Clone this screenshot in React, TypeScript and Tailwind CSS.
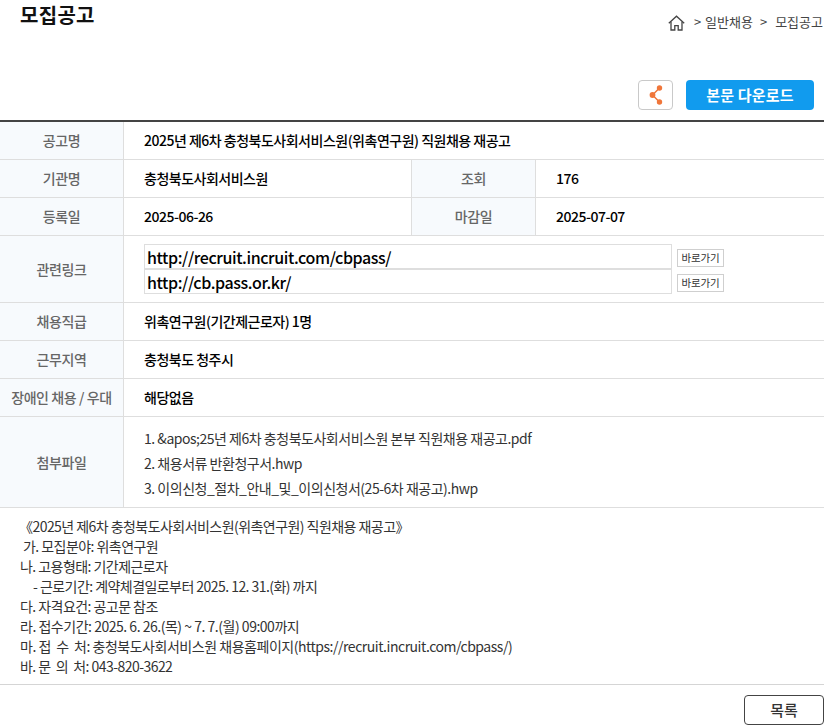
import type { ReactNode } from 'react';

const FONT = "font-['Noto_Sans_CJK_KR','Noto_Sans',sans-serif]";

const bodyLines = [
  { text: '《2025년 제6차 충청북도사회서비스원(위촉연구원) 직원채용 재공고》', className: 'pl-[19px]' },
  { text: '가. 모집분야: 위촉연구원', className: 'pl-[23px]' },
  { text: '나. 고용형태: 기간제근로자', className: 'pl-[20px]' },
  { text: '- 근로기간: 계약체결일로부터 2025. 12. 31.(화) 까지', className: 'pl-[33px]' },
  { text: '다. 자격요건: 공고문 참조', className: 'pl-[20px]' },
  { text: '라. 접수기간: 2025. 6. 26.(목) ~ 7. 7.(월) 09:00까지', className: 'pl-[20px] tracking-[-0.48px]' },
  { text: '마. 접\u00a0\u00a0수\u00a0\u00a0처: 충청북도사회서비스원 채용홈페이지(https://recruit.incruit.com/cbpass/)', className: 'pl-[20px] tracking-[-0.47px]' },
  { text: '바. 문\u00a0\u00a0의\u00a0\u00a0처: 043-820-3622', className: 'pl-[20px]' },
];

const files = [
  "1. &apos;25년 제6차 충청북도사회서비스원 본부 직원채용 재공고.pdf",
  '2. 채용서류 반환청구서.hwp',
  '3. 이의신청_절차_안내_및_이의신청서(25-6차 재공고).hwp',
];

const links = ['http://recruit.incruit.com/cbpass/', 'http://cb.pass.or.kr/'];

function Label({ children, className = 'w-[124px]' }: { children: ReactNode; className?: string }) {
  return (
    <div className={`${className} flex shrink-0 items-center justify-center border-r border-[#dedede] bg-[#f7fafd] text-[14px] font-medium tracking-[-0.4px] text-[#666]`}>
      {children}
    </div>
  );
}

function Value({ children, className = 'flex-1' }: { children: ReactNode; className?: string }) {
  return (
    <div className={`${className} flex items-center pb-[1px] pl-[20px] text-[14px] font-medium tracking-[-0.5px] text-black`}>
      {children}
    </div>
  );
}

function Row({ children, height = 'h-[38px]' }: { children: ReactNode; height?: string }) {
  return <div className={`flex ${height} border-b border-[#dedede]`}>{children}</div>;
}

function ShareIcon() {
  return (
    <svg width="16" height="20" viewBox="0 0 16 20" fill="none">
      <path d="M11.5 3 4.5 10l7 7" stroke="#f0763a" strokeWidth="1.5" />
      <circle cx="11.5" cy="3" r="2.7" fill="#f0763a" />
      <circle cx="4.5" cy="10" r="2.9" fill="#f0763a" />
      <circle cx="11.5" cy="17" r="2.7" fill="#f0763a" />
    </svg>
  );
}

function HomeIcon() {
  return (
    <svg width="17" height="16" viewBox="0 0 17 16" fill="none" stroke="#444" strokeWidth="1.3">
      <path d="M0.8 8.2 8.5 1.2l7.7 7" />
      <path d="M3 6.8V15h3.8v-4.4h3.4V15H14V6.8" />
    </svg>
  );
}

export default function App() {
  return (
    <div className={`${FONT} h-[726px] w-[824px] overflow-hidden bg-white`}>
      <div className="flex h-[80px] items-start pl-[20px]">
        <h1 className="text-[20px] leading-[30px] font-bold tracking-[0.3px] text-[#111]">모집공고</h1>
        <div className="ml-auto mr-[1px] mt-[12px] flex shrink-0 items-center text-[13px] leading-[18px] text-[#444]">
          <span className="mt-[3px] mr-[9px]"><HomeIcon /></span>
          <span>&gt;</span>
          <span className="ml-[4px]">일반채용</span>
          <span className="ml-[7px]">&gt;</span>
          <span className="ml-[8px]">모집공고</span>
        </div>
      </div>

      <div className="flex h-[40px] items-start justify-end gap-[13px] pr-[10px]">
        <button className="flex h-[30px] w-[35px] items-center justify-center rounded-[4px] border border-[#c9c9c9] bg-white">
          <ShareIcon />
        </button>
        <button className="h-[30px] w-[128px] rounded-[4px] bg-[#119bee] text-[15px] font-bold tracking-[0.2px] text-white">
          본문 다운로드
        </button>
      </div>

      <div className="border-t-2 border-[#444]">
        <Row>
          <Label>공고명</Label>
          <Value>2025년 제6차 충청북도사회서비스원(위촉연구원) 직원채용 재공고</Value>
        </Row>
        <Row>
          <Label>기관명</Label>
          <Value className="w-[288px] border-r border-[#dedede]">충청북도사회서비스원</Value>
          <Label>조회</Label>
          <Value>176</Value>
        </Row>
        <Row>
          <Label>등록일</Label>
          <Value className="w-[288px] border-r border-[#dedede]">2025-06-26</Value>
          <Label>마감일</Label>
          <Value>2025-07-07</Value>
        </Row>
        <Row height="h-[67px]">
          <Label>관련링크</Label>
          <div className="flex flex-col justify-center pl-[20px]">
            {links.map((link) => (
              <div key={link} className="flex items-center">
                <div className="flex h-[25px] w-[528px] items-center border border-[#dedede] pt-[1px] pl-[2px] text-[16px] font-medium tracking-[-0.4px] text-black">
                  {link}
                </div>
                <button className="mt-[2px] ml-[5px] h-[18px] w-[47px] border border-[#cfcfcf] text-[10.5px] tracking-[-0.1px] text-[#333]">
                  바로가기
                </button>
              </div>
            ))}
          </div>
        </Row>
        <Row>
          <Label>채용직급</Label>
          <Value>위촉연구원(기간제근로자) 1명</Value>
        </Row>
        <Row>
          <Label>근무지역</Label>
          <Value>충청북도 청주시</Value>
        </Row>
        <Row>
          <Label>장애인 채용 / 우대</Label>
          <Value>해당없음</Value>
        </Row>
        <Row height="h-[91px]">
          <Label>첨부파일</Label>
          <div className="flex flex-col justify-center pt-[2px] pl-[20px] text-[14px] leading-[25px] tracking-[-0.48px] text-[#333]">
            {files.map((file) => (
              <div key={file}>{file}</div>
            ))}
          </div>
        </Row>
      </div>

      <div className="h-[177px] border-b border-[#d5d5d5] pt-[8px] text-[14px] leading-[20px] tracking-[-0.55px] text-[#333]">
        {bodyLines.map((line) => (
          <div key={line.text} className={line.className}>{line.text}</div>
        ))}
      </div>

      <div className="flex justify-end pt-[10px]">
        <button className="h-[30px] w-[80px] rounded-[4px] border border-[#444] bg-white pt-[1px] text-[15px] font-medium text-[#333]">
          목록
        </button>
      </div>
    </div>
  );
}
